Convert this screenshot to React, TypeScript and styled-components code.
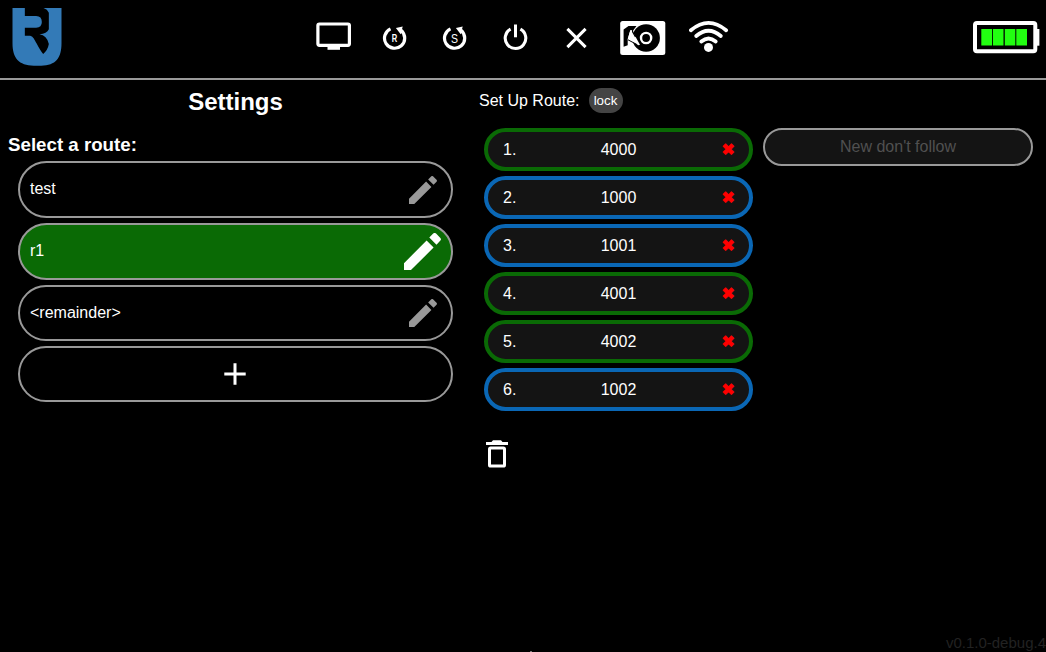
import React from "react";
import styled, { createGlobalStyle } from "styled-components";

const GlobalStyle = createGlobalStyle`
  * { box-sizing: border-box; }
  html, body { margin: 0; background: #000; overflow: hidden; }
  body { color: #fff; font-family: "Liberation Sans", Arial, sans-serif; font-size: 16px; line-height: 18px; }
  svg { display: block; }
`;

const Screen = styled.div`
  width: 100%;
  height: 100vh;
  display: flex;
  flex-direction: column;
  position: relative;
  overflow: hidden;
`;

const Header = styled.header`
  height: 80px;
  flex: none;
  display: grid;
  grid-template-columns: 74px 1fr 74px;
  border-bottom: 2px solid #999;
`;

const LogoBox = styled.div`
  padding: 8px 0 0 12px;
`;

const Tools = styled.nav`
  display: flex;
  align-items: center;
  padding: 0 0 4px 242px;
`;

const Tool = styled.button<{ $width: number; $gap?: number }>`
  width: ${(p) => p.$width}px;
  height: 36px;
  flex: none;
  margin: 0 0 0 ${(p) => p.$gap ?? 0}px;
  padding: 0;
  border: 0;
  background: none;
  color: #fff;
`;

const BatteryBox = styled.div`
  padding: 20px 0 0 0;
`;

const Main = styled.main`
  flex: 1;
  display: grid;
  grid-template-columns: 471px 1fr;
`;

const RoutesPanel = styled.section`
  padding: 8px 18px 0 18px;
`;

const Title = styled.h2`
  margin: 0;
  font-size: 24px;
  line-height: 28px;
  text-align: center;
`;

const Subtitle = styled.h3`
  margin: 18px 0 6px -10px;
  font-size: 18.72px;
  line-height: 21px;
`;

const RouteList = styled.div`
  display: flex;
  flex-direction: column;
  gap: 5px;
`;

const RouteRow = styled.div<{ $height: number; $active?: boolean; $center?: boolean }>`
  height: ${(p) => p.$height}px;
  display: flex;
  align-items: center;
  justify-content: ${(p) => (p.$center ? "center" : "space-between")};
  padding: 0 ${(p) => (p.$center ? 11 : p.$active ? 10 : 14)}px 0 10px;
  border: 2px solid #999;
  border-radius: 29px;
  background: ${(p) => (p.$active ? "#0a6a05" : "#000")};
`;

const RouteName = styled.span`
  padding-bottom: 1px;
`;

const SetupPanel = styled.section`
  padding: 8px 13px 0 8px;
`;

const SetupBar = styled.div`
  display: flex;
  align-items: center;
  gap: 9px;
  height: 25px;
`;

const LockButton = styled.button`
  width: 34px;
  height: 25px;
  padding: 0;
  border: 0;
  border-radius: 13px;
  background: #444;
  color: #fff;
  font: 13.333px "Liberation Sans", Arial, sans-serif;
`;

const Columns = styled.div`
  display: grid;
  grid-template-columns: 269px 270px;
  column-gap: 10px;
  align-items: start;
  padding: 15px 0 0 5px;
`;

const StopList = styled.div`
  display: flex;
  flex-direction: column;
  gap: 5px;
`;

const Stop = styled.div<{ $color: string }>`
  height: 43px;
  display: grid;
  grid-template-columns: 40px 1fr 41px;
  align-items: center;
  padding: 0 14px 0 15px;
  border: 4px solid ${(p) => p.$color};
  border-radius: 21.5px;
  background: #141414;
`;

const StopId = styled.span`
  text-align: center;
`;

const Remove = styled.span`
  color: #f00;
  text-align: right;
  font-weight: bold;
  font-family: "Liberation Sans", "DejaVu Sans", sans-serif;
  -webkit-text-stroke: 0.8px #f00;
`;

const AvoidInput = styled.input`
  width: 100%;
  height: 38px;
  padding: 0 10px;
  border: 2px solid #999;
  border-radius: 19px;
  background: #141414;
  color: #fff;
  font: 16px "Liberation Sans", Arial, sans-serif;
  text-align: center;
  &::placeholder { color: #505050; opacity: 1; }
`;

const DeleteButton = styled.button`
  display: block;
  margin: 29px 0 0 7px;
  padding: 0;
  border: 0;
  background: none;
`;

const Version = styled.div`
  position: absolute;
  right: 0;
  bottom: 0;
  font-size: 15px;
  color: #222;
`;

const Handle = styled.div`
  position: absolute;
  left: 530px;
  bottom: 0;
  width: 2px;
  height: 1px;
  background: #777;
`;

const Logo = () => (
  <svg width="50" height="59" viewBox="36.5 24 150 177">
    <path
      fill="#337ab7"
      d="M38 24H75V48H109Q126 48 126 66Q126 83 109 83H75V107H91C101 110 104 119 110 130Q122 153 130 162Q144 150 147 132Q141 106 119 103Q141 101 147 88V38Q143 28 131 24H185V130C185 174 168 197 124 197H102C57 197 38 174 38 130Z"
    />
  </svg>
);

const Monitor = () => (
  <svg width="36" height="36" viewBox="0 0 36 36">
    <rect x="1.9" y="5" width="31.5" height="21.3" rx="1.5" fill="none" stroke="#fff" strokeWidth="3.2" />
    <path d="M11.5 27H24V30.8H11.5Z" fill="#fff" />
  </svg>
);

const Restart = ({ letter, bold }: { letter: string; bold?: boolean }) => (
  <svg width="26" height="36" viewBox="0.5 0 26 36">
    <path d="M9 9.9A10.1 10.1 0 1 0 19.6 11.4" fill="none" stroke="#fff" strokeWidth="3.2" />
    <path d="M14.4 9L21.2 7.6L20.5 10.2L22 11.6L19.2 15.2Z" fill="#fff" />
    <text
      x="13"
      y={bold ? 22.8 : 23.6}
      textAnchor="middle"
      fill="#fff"
      fontFamily="Liberation Sans"
      fontSize={bold ? 10 : 12}
      fontWeight={bold ? 700 : 400}
      textLength={bold ? 5.5 : 7}
      lengthAdjust="spacingAndGlyphs"
    >
      {letter}
    </text>
  </svg>
);

const Power = () => (
  <svg width="26" height="36" viewBox="-0.5 0 26 36">
    <path d="M8.1 10.1A10.3 10.3 0 1 0 17.9 10.1" fill="none" stroke="#fff" strokeWidth="3.1" />
    <path d="M11.5 5.5H14.5V18.3H11.5Z" fill="#fff" />
  </svg>
);

const Close = () => (
  <svg width="24" height="36" viewBox="-0.5 0 24 36">
    <path d="M2.9 9.9L21.1 28.1M21.1 9.9L2.9 28.1" stroke="#fff" strokeWidth="3" />
  </svg>
);

const Drive = () => (
  <svg width="46" height="36" viewBox="0 0 46 36">
    <rect x="0.2" y="2" width="45.1" height="34" rx="2.5" fill="#fff" />
    <circle cx="26.1" cy="19" r="13.8" fill="#000" />
    <path d="M3.6 10.5L5 9.5L8.5 7H16.5L13.5 11L10.3 11.2L7.7 20.3V26.3L3.6 27.8Z" fill="#000" />
    <path d="M10.3 11.2L12.6 12.4L20 25.8L18.5 26.2L7.7 20.3Z" fill="#fff" />
    <path d="M12.6 10.6L12.6 12.8L15.5 18" fill="none" stroke="#000" strokeWidth="1.2" />
    <path d="M8 20.8L17 25.6" fill="none" stroke="#000" strokeWidth="1" />
    <circle cx="26.1" cy="19" r="5.1" fill="#000" stroke="#fff" strokeWidth="2.4" />
  </svg>
);

const Wifi = () => (
  <svg width="40" height="36" viewBox="0.3 -0.3 40 36">
    <g fill="none" stroke="#fff" strokeWidth="3.8" strokeLinecap="round">
      <path d="M2.2 11Q19.8-3.8 37.4 11" />
      <path d="M7.5 16.7Q19.8 6.3 32.1 16.7" />
      <path d="M12.6 22.2Q19.8 16.1 27 22.2" />
    </g>
    <circle cx="19.8" cy="28.1" r="4.5" fill="#fff" />
  </svg>
);

const Battery = () => (
  <svg width="74" height="36" viewBox="0 0 74 36">
    <rect x="3" y="3" width="60.3" height="28.3" rx="2" fill="none" stroke="#fff" strokeWidth="4" />
    <path d="M63 9H67.4V25.7H63Z" fill="#fff" />
    <g fill="#2f1">
      <rect x="9.3" y="9" width="10.8" height="16.5" />
      <rect x="21" y="9" width="10.5" height="16.5" />
      <rect x="32.8" y="9" width="10.5" height="16.5" />
      <rect x="44.3" y="9" width="10.7" height="16.5" />
    </g>
  </svg>
);

const Pencil = ({ size, color }: { size: number; color: string }) => (
  <svg width={size} height={size} viewBox="3 3 18 18">
    <path
      fill={color}
      d="M3 17.7V21h3.4L17.4 10.1l-3.4-3.5L3 17.7zM20.7 6.7a1 1 0 0 0 0-1.3l-2.1-2.1a1 1 0 0 0-1.4 0l-1.9 1.9 3.5 3.5 1.9-2z"
    />
  </svg>
);

const Plus = () => (
  <svg width="22" height="22" viewBox="0 0 22 22">
    <path d="M11 0.3V21.7M0.3 11H21.7" stroke="#fff" strokeWidth="3" />
  </svg>
);

const Trash = () => (
  <svg width="22" height="28" viewBox="0 0 22 28">
    <path d="M0 2H5.5L7 .3H15L16.5 2H22V5H0Z" fill="#fff" />
    <rect x="3.5" y="7.9" width="15" height="18.2" rx="1.2" fill="none" stroke="#fff" strokeWidth="3" />
  </svg>
);

const GREEN = "#0a6a05";
const BLUE = "#0a67b5";

const stops = [
  { id: "4000", color: GREEN },
  { id: "1000", color: BLUE },
  { id: "1001", color: BLUE },
  { id: "4001", color: GREEN },
  { id: "4002", color: GREEN },
  { id: "1002", color: BLUE },
];

export default function App() {
  return (
    <Screen>
      <GlobalStyle />
      <Header>
        <LogoBox><Logo /></LogoBox>
        <Tools>
          <Tool $width={36}><Monitor /></Tool>
          <Tool $width={26} $gap={30}><Restart letter="R" bold /></Tool>
          <Tool $width={26} $gap={34}><Restart letter="S" /></Tool>
          <Tool $width={26} $gap={34}><Power /></Tool>
          <Tool $width={24} $gap={36}><Close /></Tool>
          <Tool $width={46} $gap={32}><Drive /></Tool>
          <Tool $width={40} $gap={23}><Wifi /></Tool>
        </Tools>
        <BatteryBox><Battery /></BatteryBox>
      </Header>
      <Main>
        <RoutesPanel>
          <Title>Settings</Title>
          <Subtitle>Select a route:</Subtitle>
          <RouteList>
            <RouteRow $height={57}><RouteName>test</RouteName><Pencil size={28} color="#999" /></RouteRow>
            <RouteRow $height={57} $active><RouteName>r1</RouteName><Pencil size={37} color="#fff" /></RouteRow>
            <RouteRow $height={56}><RouteName>&lt;remainder&gt;</RouteName><Pencil size={28} color="#999" /></RouteRow>
            <RouteRow $height={56} $center><Plus /></RouteRow>
          </RouteList>
        </RoutesPanel>
        <SetupPanel>
          <SetupBar>
            <span>Set Up Route:</span>
            <LockButton>lock</LockButton>
          </SetupBar>
          <Columns>
            <StopList>
              {stops.map((stop, i) => (
                <Stop key={stop.id} $color={stop.color}>
                  <span>{i + 1}.</span>
                  <StopId>{stop.id}</StopId>
                  <Remove>✖</Remove>
                </Stop>
              ))}
            </StopList>
            <AvoidInput placeholder="New don't follow" />
          </Columns>
          <DeleteButton><Trash /></DeleteButton>
        </SetupPanel>
      </Main>
      <Version>v0.1.0-debug.4</Version>
      <Handle />
    </Screen>
  );
}
